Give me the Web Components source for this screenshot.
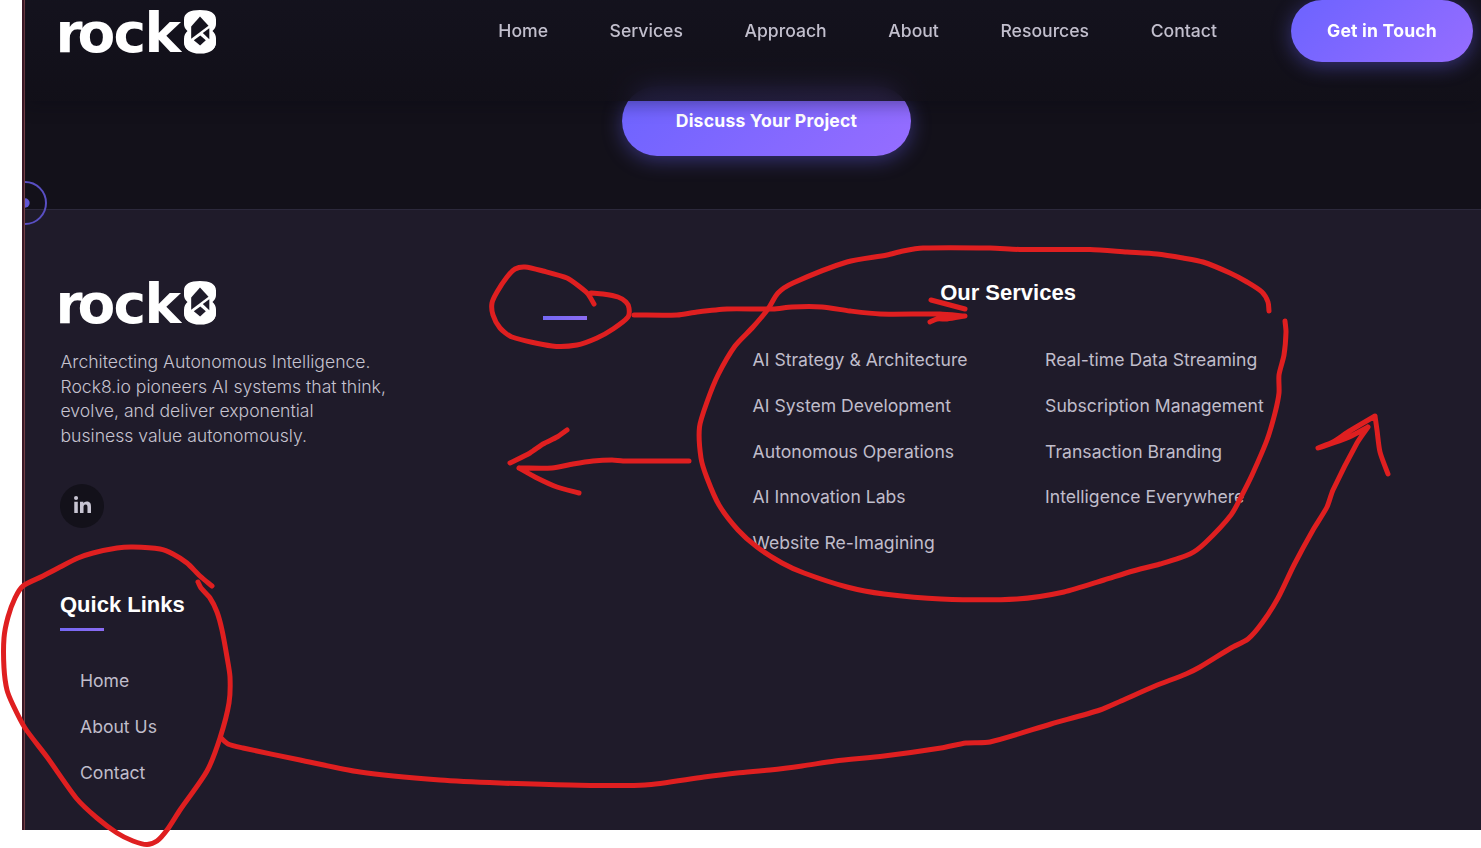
<!DOCTYPE html>
<html lang="en">
<head>
<meta charset="utf-8">
<title>Rock8</title>
<style>
html,body{margin:0;background:#fff;overflow:hidden}
body{width:1481px;height:848px;position:relative;font-family:Inter,"Liberation Sans",sans-serif}
</style>
</head>
<body>
<rock-page></rock-page>
<ink-layer></ink-layer>
<script>
const define = (name, html, setup) => customElements.define(name, class extends HTMLElement {
  constructor() {
    super();
    this.attachShadow({mode: 'open'}).innerHTML = html;
  }
  connectedCallback() { if (setup) setup(this, this.shadowRoot); }
});

define('rock-logo', `<style>
:host{display:block;width:160px;height:48px}
svg{display:block;overflow:visible}
text{font-family:"DejaVu Sans",sans-serif;font-weight:700;font-size:55px;fill:#fff}
.cut{fill:var(--cut,#15131e)}
</style>
<svg width="160" height="48" viewBox="0 0 160 48" role="img" aria-label="rock8">
<text y="46" x="-4.6 17.5 53.5 84.5 121">rock8</text>
<path fill="#fff" d="M140 4c10 0 16 3 16 9.500v4c0 4-1.500 5.500-3.500 7.500 2 2 3.500 4 3.500 8v3.500c0 7-6 9.700-16 9.700s-16-2.700-16-9.700V33c0-4 1.500-6 3.500-8-2-2-3.500-3.500-3.500-7.500v-4C124 7 130 4 140 4z"/>
<g class="cut"><path d="M140 10.500l8.500 9.300-17.300 13V20.500z"/><path d="M149.300 22.300v11l-6.500-6.300z"/><path d="M140.300 29.500l5.500 4.800-5.700 5.200-6.300-5.300z"/></g>
</svg>`);

define('nav-link', `<style>
:host{display:block;font-size:17.6px;font-weight:500;line-height:26px;color:#c2bfcd;white-space:nowrap}
a{color:inherit;text-decoration:none}
</style><a><slot></slot></a>`);

define('glow-button', `<style>
:host{display:block;box-sizing:border-box;height:var(--h,62px);width:var(--w,182px)}
button{display:flex;align-items:center;justify-content:center;width:100%;height:100%;padding:0 0 2px;border:0;border-radius:99px;color:#fff;font:700 17.6px Inter,sans-serif;letter-spacing:.2px;white-space:nowrap;background:linear-gradient(135deg,#6c63ff,#966dff);box-shadow:0 4px 20px rgba(108,99,255,.4)}
</style><button><slot></slot></button>`);

define('site-header', `<style>
:host{display:flex;position:relative;z-index:2;box-sizing:border-box;height:101px;padding:0 8px 0 35px;align-items:flex-start;background:linear-gradient(rgba(21,19,31,.85),rgba(18,16,25,.85));backdrop-filter:blur(10px);box-shadow:0 4px 16px rgba(10,8,20,.35)}
rock-logo{margin-top:6px}
nav{display:flex;gap:61.600px;margin:18px 74px 0 auto}
</style>
<rock-logo></rock-logo>
<nav><nav-link>Home</nav-link><nav-link>Services</nav-link><nav-link>Approach</nav-link><nav-link>About</nav-link><nav-link>Resources</nav-link><nav-link>Contact</nav-link></nav>
<glow-button>Get in Touch</glow-button>`);

define('cta-band', `<style>
:host{display:flex;box-sizing:border-box;height:209px;margin-top:-101px;padding:86px 0 0 597px;background:#13111a}
glow-button{--w:289px;--h:70px}
</style><glow-button>Discuss Your Project</glow-button>`);

define('accent-bar', `<style>
:host{display:block;width:44px;height:var(--bar,3px);background:linear-gradient(90deg,#7468f4,#8b6cf2)}
</style>`);

define('column-title', `<style>
:host{display:block}
h3{margin:0;font:700 22px/28px "Liberation Sans",Arial,sans-serif;color:#fff;white-space:nowrap}
</style><h3><slot></slot></h3>`);

define('foot-link', `<style>
:host{display:block;font-size:17.6px;line-height:28px;height:45.8px;color:#c0bdcb;white-space:nowrap}
a{color:inherit;text-decoration:none}
</style><a><slot></slot></a>`);

define('social-badge', `<style>
:host{display:flex;width:44px;height:44px;border-radius:50%;background:#13111a;align-items:center;justify-content:center;color:#c8c5d3}
svg{margin-top:-3px}
</style>
<svg width="17" height="17" viewBox="0 0 448 448" fill="currentColor" role="img" aria-label="LinkedIn"><path d="M100 448H7V149h93zM54 108a54 54 0 1 1 0-108 54 54 0 0 1 0 108zM448 448h-93V302c0-34-1-79-48-79-49 0-56 38-56 77v148h-93V149h89v41h1c13-24 43-48 88-48 94 0 112 62 112 142z"/></svg>`);

define('site-footer', `<style>
:host{display:grid;box-sizing:border-box;height:621px;border-top:1px solid #2c293c;background:#1f1b2a;padding:67px 35px 0;grid-template-columns:483px 210px 510px;grid-template-rows:312px auto}
rock-logo{--cut:#1f1b2a}
p{margin:25px 0 35px .5px;font-size:17.6px;font-weight:300;line-height:24.7px;color:#c6c3d0;white-space:nowrap}
.mark{padding-top:39px}
.mark accent-bar{--bar:4px}
.services{padding-top:2px}
.services column-title{text-align:center;margin-bottom:39px}
.lists{display:grid;grid-template-columns:292.500px 1fr;margin-left:-.4px}
.quick{padding-top:2px}
.quick accent-bar{margin-top:9px}
.quick div{padding:36px 0 0 20px}
</style>
<section><rock-logo></rock-logo><p>Architecting Autonomous Intelligence.<br>Rock8.io pioneers AI systems that think,<br>evolve, and deliver exponential<br>business value autonomously.</p><social-badge></social-badge></section>
<section class="mark"><accent-bar></accent-bar></section>
<section class="services"><column-title>Our Services</column-title>
<div class="lists"><div><foot-link>AI Strategy &amp; Architecture</foot-link><foot-link>AI System Development</foot-link><foot-link>Autonomous Operations</foot-link><foot-link>AI Innovation Labs</foot-link><foot-link>Website Re-Imagining</foot-link></div>
<div><foot-link>Real-time Data Streaming</foot-link><foot-link>Subscription Management</foot-link><foot-link>Transaction Branding</foot-link><foot-link>Intelligence Everywhere</foot-link></div></div></section>
<section class="quick"><column-title>Quick Links</column-title><accent-bar></accent-bar><div><foot-link>Home</foot-link><foot-link>About Us</foot-link><foot-link>Contact</foot-link></div></section>`);

define('cursor-ring', `<style>
:host{display:block;position:absolute;left:0;top:181px;width:22px;height:44px;overflow:hidden;z-index:3}
svg{display:block}
</style><svg width="22" height="44"><circle cx="0" cy="22" r="21" fill="none" stroke="#594fc3" stroke-width="2"/><circle cx="0" cy="22" r="4.700" fill="#6257d3"/></svg>`);

define('rock-page', `<style>
:host{display:block;position:relative;box-sizing:border-box;width:1459px;height:830px;margin-left:22px;border-left:2px solid #3a1825;overflow:hidden;background:#13111a}
main{position:relative;border-left:1px solid #713f46}
</style><main><site-header></site-header><cta-band></cta-band><site-footer></site-footer><cursor-ring></cursor-ring></main>`);

/* Hand-drawn markup strokes, each a list of x,y points joined by a smooth curve. */
const strokes = [
 '594,304 588,294 580,287 567,278 543,271 525,267 515,269 507,277 497,292 492,303 493,315 500,328 512,337 552,346 577,345 597,338 613,329 628,317 629,308 626,302 618,297 603,294 591,293',
 '634,315 677,315 697,312 727,309 773,309 792,307 822,307 850,311 880,314 940,314 965,316|965,316 947,319 937,319 930,322',
 '931,300 965,309',
 '689,461 623,461 612,460 593,461 573,464 552,468 519,468|519,468 537,478 557,487 579,493',
 '567,430 557,437 543,444 530,453 510,463',
 '1269,311 1268,302 1262,292 1247,282 1230,273 1203,262 1183,258 1157,254 1127,252 1090,249.5 1020,249.5 990,248 923,248 903,251 887,255 847,262 793,283 778,293 768,309 753,327 735,346 718,375 707,402 699.5,427 701,458 707,478 719,505 738,530 757,547 782,563 804,573 847,587 884,594 941,599 1017,599 1064,592 1104,580 1133,571 1160,564 1190,554 1205,543 1231,515 1242,495 1252,475 1267,440 1275,413 1279,393 1279,375 1284,355 1286,332 1285,321',
 '212,586 200,576 187,563 173,554 160,549 133,547 117,548 93,553 78,558 60,567 43,576 23,586 15,598 8,617 4,638 4,668 7,690 13,705 25,728 47,757 77,799 97,818 117,833 133,841 147,844.5 157,841 167,830 180,810 207,771 220,738 229,703 230,677 227,657 222,630 217,612 210,598 201,588 198,582',
 '221,738 228,744 243,748 300,760 360,772 440,780 500,783 570,785 645,785 704,777 737,773 770,770 802,766 835,761 884,756 941,748 966,743 990,742 1051,724 1100,710 1121,701 1155,686 1186,674 1200,667 1231,648 1248,639 1262,623 1278,598 1294,565 1313,530 1327,507 1333,490 1357,443 1368,427|1368,427 1347,438 1318,448|1318,448 1333,442 1348,432 1375,416|1375,416 1377,430 1380,452 1388,474'
];
/* The tangent at each point follows its neighbours; a small pull keeps long segments from bulging. */
const curve = s => s.split('|').map(part => {
  const p = part.split(' ').map(q => q.split(',').map(Number));
  let d = `M${p[0]}`;
  for (let i = 0; i < p.length - 1; i++) {
    const a = p[i - 1] || p[i], b = p[i], c = p[i + 1], e = p[i + 2] || c;
    const l = Math.hypot(c[0] - b[0], c[1] - b[1]);
    const h = (u, v) => { const m = Math.hypot(v[0] - u[0], v[1] - u[1]) || 1; return [(v[0] - u[0]) / m * l / 4, (v[1] - u[1]) / m * l / 4]; };
    const t = h(a, c), w = h(b, e);
    d += `C${b[0] + t[0]} ${b[1] + t[1]} ${c[0] - w[0]} ${c[1] - w[1]} ${c[0]} ${c[1]}`;
  }
  return d;
}).join('');
define('ink-layer', `<style>
:host{display:block;position:absolute;inset:0;z-index:5;pointer-events:none}
svg{display:block}
</style><svg width="1481" height="848" fill="none" stroke="#df1f20" stroke-width="5" stroke-linecap="round" stroke-linejoin="round">${strokes.map(s => `<path d="${curve(s)}"/>`).join('')}</svg>`);
</script>
</body>
</html>
